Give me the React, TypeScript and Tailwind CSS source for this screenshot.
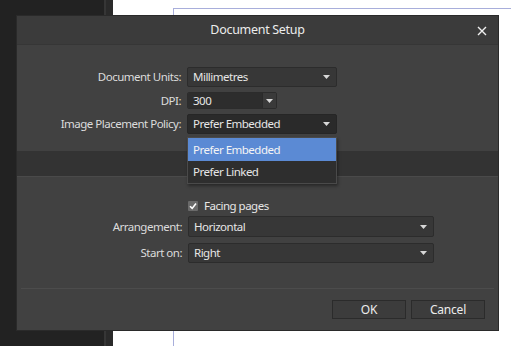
import React from "react";

const font = { fontFamily: '"Noto Sans", "Open Sans", sans-serif' };

function Arrow() {
  return (
    <svg width="7" height="4" viewBox="0 0 7 4" className="shrink-0">
      <path d="M0 0 H7 L3.5 4 Z" fill="#d8d8d8" />
    </svg>
  );
}

function Select({
  value,
  width,
  height = "h-[20px]",
  dark = false,
}: {
  value: string;
  width: string;
  height?: string;
  dark?: boolean;
}) {
  return (
    <div
      className={`${width} ${height} flex items-center justify-between pl-[5px] pr-[6px] rounded-[2px] border ${
        dark ? "bg-[#2a2a2a] border-[#262626]" : "bg-[#373737] border-[#2c2c2c]"
      }`}
    >
      <span className="text-[#e6e6e6]">{value}</span>
      <Arrow />
    </div>
  );
}

function Label({ children }: { children: React.ReactNode }) {
  return <span className="text-right text-[#dcdcdc]">{children}</span>;
}

export default function App() {
  return (
    <div
      className="relative w-[511px] h-[346px] flex overflow-hidden bg-white text-[11.5px] leading-none tracking-[-0.5px]"
      style={font}
    >
      <div className="w-[104px] bg-[#222222]" />
      <div className="w-[2px] bg-[#363636]" />
      <div className="w-[7px] bg-[#2a2a2a]" />
      <div className="flex-1 bg-white pl-[60px] pt-[8px]">
        <div className="h-full border-l border-t border-[#a8aedb]" />
      </div>

      {/* dialog */}
      <div className="absolute left-[17px] top-[16px] w-[481px] h-[314px] flex flex-col bg-[#414141] shadow-[0_0_0_1px_#2a2a2a]">
        <div className="h-[29px] shrink-0 flex items-center justify-center relative bg-[#3b3b3b] border-b border-[#363636]">
          <span className="text-[12.5px] tracking-[-0.3px] text-[#ececec]">Document Setup</span>
          <svg
            width="10"
            height="10"
            viewBox="0 0 10 10"
            className="absolute right-[11px] top-[10px]"
          >
            <path d="M1 1 L9 9 M9 1 L1 9" stroke="#f0f0f0" strokeWidth="1.4" />
          </svg>
        </div>

        <div className="h-[106px] shrink-0 pt-[22px] grid grid-cols-[164px_150px] gap-x-[6px] gap-y-[5px] content-start items-center">
          <Label>Document Units:</Label>
          <Select value="Millimetres" width="w-[150px]" />
          <Label>DPI:</Label>
          <div className="w-[90px] h-[17px] flex rounded-[2px] border border-[#2c2c2c] overflow-hidden">
            <div className="flex-1 bg-[#2d2d2d] flex items-center pl-[5px] text-[#e6e6e6]">
              300
            </div>
            <div className="w-[14px] bg-[#3a3a3a] border-l border-[#2a2a2a] flex items-center justify-center">
              <Arrow />
            </div>
          </div>
          <Label>Image Placement Policy:</Label>
          <Select value="Prefer Embedded" width="w-[150px]" dark />
        </div>

        <div className="h-[26px] shrink-0 bg-[#333333] border-b border-[#4a4a4a]" />

        <div className="h-[111px] shrink-0 pt-[25px] grid grid-cols-[165px_246px] gap-x-[6px] gap-y-[6px] content-start items-center">
          <span />
          <div className="flex items-center gap-[6px] h-[8px]">
            <div className="w-[10px] h-[10px] bg-[#6a6a6a] rounded-[1px] flex items-center justify-center">
              <svg width="8" height="8" viewBox="0 0 8 8">
                <path
                  d="M1 4.2 L3.2 6.4 L7 1.5"
                  stroke="#ffffff"
                  strokeWidth="1.6"
                  fill="none"
                />
              </svg>
            </div>
            <span className="text-[#e6e6e6]">Facing pages</span>
          </div>
          <Label>Arrangement:</Label>
          <Select value="Horizontal" width="w-[246px]" height="h-[21px]" />
          <Label>Start on:</Label>
          <Select value="Right" width="w-[246px]" />
        </div>

        <div className="mx-[4px] h-px shrink-0 bg-[#2b2b2b] border-b border-[#4c4c4c]" />

        <div className="flex-1 flex items-center justify-end gap-[5px] pr-[13px]">
          <button className="w-[74px] h-[19px] bg-[#3c3c3c] border border-[#2b2b2b] text-[12px] tracking-[-0.2px] text-[#ececec]">
            OK
          </button>
          <button className="w-[74px] h-[19px] bg-[#3c3c3c] border border-[#2b2b2b] text-[12px] tracking-[-0.2px] text-[#ececec]">
            Cancel
          </button>
        </div>

        {/* open dropdown list */}
        <div className="absolute left-[170px] top-[121px] w-[150px] flex flex-col bg-[#2e2e2e] border border-[#4a4a4a] shadow-[1px_2px_3px_rgba(0,0,0,0.4)]">
          <div className="h-[23px] flex items-center pl-[5px] bg-[#5b8ad4] text-[#f4f4f4]">
            Prefer Embedded
          </div>
          <div className="h-[22px] flex items-center pl-[5px] text-[#e6e6e6]">
            Prefer Linked
          </div>
        </div>
      </div>
    </div>
  );
}
